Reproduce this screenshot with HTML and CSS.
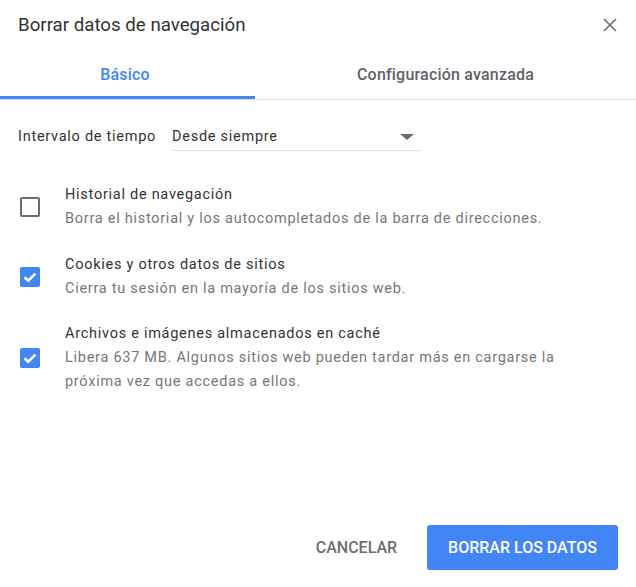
FILE: index.html
```html
<!DOCTYPE html>
<html lang="es">
<head>
<meta charset="utf-8">
<title>Borrar datos de navegación</title>
<link rel="stylesheet" href="styles.css">
</head>
<body>
<div class="dialog">
  <div class="header">
    <h1 class="title">Borrar datos de navegación</h1>
    <button class="close" aria-label="Cerrar">
      <svg width="14" height="14" viewBox="0 0 14 14"><path d="M1 1L13 13M13 1L1 13" stroke="#6b6b6b" stroke-width="1.6" fill="none"/></svg>
    </button>
  </div>
  <div class="tabs">
    <div class="tab tab-active">Básico</div>
    <div class="tab tab-rest">Configuración avanzada</div>
  </div>
  <div class="content">
    <div class="range">
      <span class="range-label">Intervalo de tiempo</span>
      <div class="select">
        <span class="select-value">Desde siempre</span>
        <span class="arrow"></span>
      </div>
    </div>
    <div class="items">
      <div class="item">
        <span class="box"></span>
        <div class="item-text">
          <div class="item-title">Historial de navegación</div>
          <div class="item-desc">Borra el historial y los autocompletados de la barra de direcciones.</div>
        </div>
      </div>
      <div class="item">
        <span class="box box-checked"><svg width="20" height="20" viewBox="0 0 20 20"><path d="M4.5 10.2L8.2 13.8L15.5 6.6" stroke="#fff" stroke-width="2.6" fill="none"/></svg></span>
        <div class="item-text">
          <div class="item-title">Cookies y otros datos de sitios</div>
          <div class="item-desc">Cierra tu sesión en la mayoría de los sitios web.</div>
        </div>
      </div>
      <div class="item">
        <span class="box box-checked"><svg width="20" height="20" viewBox="0 0 20 20"><path d="M4.5 10.2L8.2 13.8L15.5 6.6" stroke="#fff" stroke-width="2.6" fill="none"/></svg></span>
        <div class="item-text">
          <div class="item-title">Archivos e imágenes almacenados en caché</div>
          <div class="item-desc">Libera 637 MB. Algunos sitios web pueden tardar más en cargarse la próxima vez que accedas a ellos.</div>
        </div>
      </div>
    </div>
  </div>
  <div class="footer">
    <button class="btn btn-cancel">CANCELAR</button>
    <button class="btn btn-primary">BORRAR LOS DATOS</button>
  </div>
</div>
</body>
</html>
```
FILE: styles.css
```css
* { box-sizing: border-box; }
html, body { margin: 0; padding: 0; background: #fff; }
body { font-family: Roboto, "Noto Sans", Arial, sans-serif; color: #333; }
.dialog { width: 636px; height: 587px; display: flex; flex-direction: column; }
.header { height: 48px; display: flex; justify-content: space-between; align-items: flex-start; padding: 13px 19px 0 18px; }
.title { margin: 0; font-size: 18.7px; font-weight: 400; line-height: 24px; color: #333; }
.close { border: 0; background: none; padding: 0; margin-top: 5px; width: 14px; height: 14px; display: block; }
.close svg { display: block; }
.tabs { display: flex; border-bottom: 1px solid #e0e0e0; }
.tab { padding: 17px 0 11px; font-size: 16px; line-height: 20px; font-weight: 500; text-align: center; color: #5f6368; border-bottom: 3px solid transparent; letter-spacing: 0.2px; }
.tab-active { width: 255px; padding-right: 5px; color: #4285f4; border-bottom-color: #4285f4; }
.tab-rest { flex: 1; }
.content { flex: 1; padding: 0 18px; }
.range { display: flex; align-items: flex-start; padding-top: 25px; }
.range-label { font-size: 14.5px; letter-spacing: 0.73px; line-height: 24px; margin-right: 16px; color: #333; }
.select { width: 250px; display: flex; justify-content: space-between; align-items: center; border-bottom: 1px solid #e0e0e0; height: 26px; padding-right: 8px; }
.select-value { font-size: 14.5px; letter-spacing: 0.73px; line-height: 24px; color: #333; align-self: flex-start; }
.arrow { width: 0; height: 0; border-left: 7px solid transparent; border-right: 7px solid transparent; border-top: 6px solid #6b6b6b; margin-bottom: 2px; }
.items { display: flex; flex-direction: column; gap: 21.5px; padding-top: 32px; }
.item { display: flex; align-items: center; }
.box { width: 20px; height: 20px; margin-left: 2px; margin-right: 25px; border: 2.5px solid #6e6e6e; border-radius: 2px; flex: none; }
.box-checked { border: 0; background: #4285f4; }
.box-checked svg { display: block; }
.item-text { font-size: 14.5px; letter-spacing: 0.73px; line-height: 24px; max-width: 500px; }
.item-title { color: #333; }
.item-desc { color: #777; }
.footer { display: flex; justify-content: flex-end; gap: 9px; padding: 0 18px 17px; }
.btn { font-family: Roboto, "Noto Sans", Arial, sans-serif; font-size: 16px; font-weight: 500; height: 45px; padding: 0 21px; border: 0; border-radius: 3px; background: none; cursor: pointer; }
.btn-cancel { color: #6e6e6e; }
.btn-primary { background: #4285f4; color: #fff; }
```
